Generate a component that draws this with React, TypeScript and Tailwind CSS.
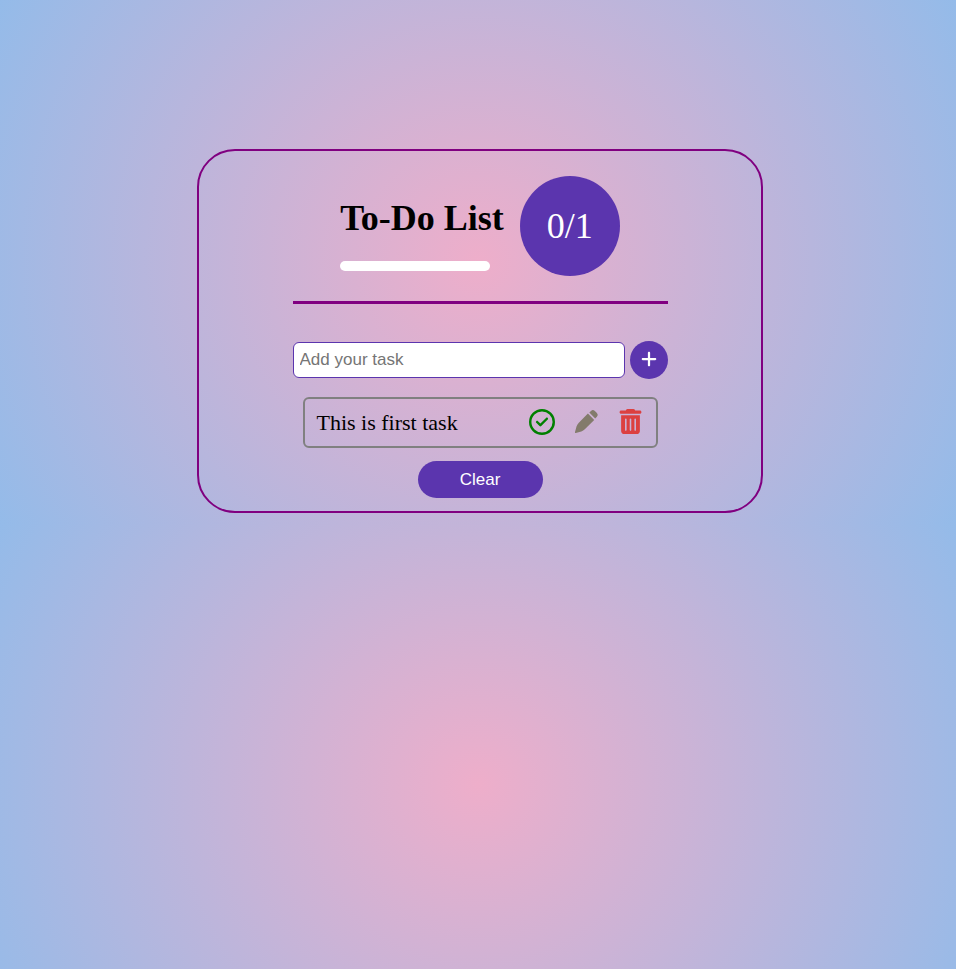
import { useState } from "react";
import { FaPlus, FaRegCircleCheck, FaTrashCan } from "react-icons/fa6";

function Pencil() {
  return (
    <svg viewBox="0 0 25 25" className="size-[25px]" fill="currentColor" aria-hidden="true">
      <path d="M15.3 3.6 17 1.9Q18.9 .2 20.8 1.9L22.9 4Q24.7 5.9 22.9 7.8L21.2 9.5Z" />
      <path d="M13.9 4.6 20.2 10.9 10.8 20.3Q9.3 21.8 7.3 22.4L1.8 24Q.7 24.2 1 23L2.5 17.6Q3.1 15.5 4.6 14Z" />
    </svg>
  );
}

export default function App() {
  const [task, setTask] = useState("");
  return (
    <div className="flex min-h-screen flex-col items-center bg-[radial-gradient(circle,rgb(238,174,202)_0%,rgb(148,187,233)_100%)] bg-[length:100%_523px] pt-[149px] pl-1 font-['Liberation_Serif',serif] text-black">
      <main className="flex w-[566px] max-w-full flex-col items-center rounded-[38px] border-2 border-[#800080] pt-[25px] pb-[13px]">
        <div className="w-[375px] max-w-full">
          <header className="flex justify-center gap-4 border-b-[3px] border-[#800080] pb-[25px]">
            <div className="flex flex-col pt-[22px]">
              <h1 className="text-[36px] leading-10 font-bold whitespace-nowrap">To-Do List</h1>
              <div
                role="progressbar"
                aria-label="Tasks done"
                aria-valuenow={0}
                aria-valuemax={1}
                className="mt-[23px] h-[10px] w-[150px] rounded-[5px] bg-white"
              />
            </div>
            <div className="flex size-[100px] items-center justify-center rounded-full bg-[#5b35ae] text-[36px] text-white">0/1</div>
          </header>
          <form className="mt-[37px] flex items-center gap-[5px]" onSubmit={(e) => e.preventDefault()}>
            <input
              type="text"
              aria-label="Add your task"
              placeholder="Add your task"
              value={task}
              onChange={(e) => setTask(e.target.value)}
              className="h-9 min-w-0 flex-1 rounded-md border border-[#5b35ae] bg-white px-1.5 font-['Liberation_Sans',Arial,sans-serif] text-[17px] placeholder:text-[#757575]"
            />
            <button
              type="submit"
              aria-label="Add"
              className="flex size-[38px] items-center justify-center rounded-full bg-[#5b35ae] pb-0.5 text-[18px] text-white"
            >
              <FaPlus />
            </button>
          </form>
          <ul className="mx-[10px] mt-[18px]">
            <li className="flex h-[51px] items-center justify-between rounded-md border-2 border-[#808080] pr-[13px] pl-3">
              <span className="text-[22px]">This is first task</span>
              <span className="flex items-center gap-[19px] pb-0.5">
                <button type="button" aria-label="Complete" className="text-[26px] text-[#008000]">
                  <FaRegCircleCheck />
                </button>
                <button type="button" aria-label="Edit" className="text-[#837b6c]">
                  <Pencil />
                </button>
                <button type="button" aria-label="Delete" className="text-[25px] text-[#dc4040]">
                  <FaTrashCan />
                </button>
              </span>
            </li>
          </ul>
        </div>
        <button
          type="button"
          className="mt-[13px] h-[37px] w-[125px] rounded-full bg-[#5b35ae] font-['Liberation_Sans',Arial,sans-serif] text-[17px] text-white"
        >
          Clear
        </button>
      </main>
    </div>
  );
}
